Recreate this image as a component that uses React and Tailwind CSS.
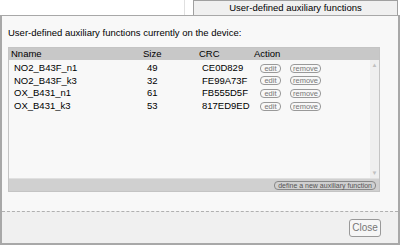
export default function App() {
  const rows = [
    ["NO2_B43F_n1", "49", "CE0D829"],
    ["NO2_B43F_k3", "32", "FE99A73F"],
    ["OX_B431_n1", "61", "FB555D5F"],
    ["OX_B431_k3", "53", "817ED9ED"],
  ];
  return (
    <div className="w-[400px] h-[245px] bg-white flex flex-col text-black" style={{ fontFamily: '"Liberation Sans", Arial, sans-serif' }}>
      <div className="h-[15px] flex shrink-0">
        <div className="ml-[184px] w-[9px] border-l border-[#e0e0e0]"></div>
        <div className="w-[205px] h-[16px] border border-[#a0a0a0] bg-[#f0f0f0] text-[9.5px] leading-[14px] text-center text-black">
          User-defined auxiliary functions
        </div>
      </div>
      <div className="w-[400px] h-[230px] flex flex-col border-t border-l-2 border-b-2 border-r-2 border-[#a8a8a8] bg-[#f8f8f8]">
        <div className="flex-1 px-[6px] pt-[11px] flex flex-col">
          <div className="text-[9.5px] leading-[12px] text-black">User-defined auxiliary functions currently on the device:</div>
          <div className="mt-[8px] w-[372px] border border-[#c4c4c4] flex flex-col">
            <div className="h-[12px] bg-[#c8c8c8] flex text-[9.5px] leading-[12px] text-black">
              <div className="w-[134px] pl-[2px]">Nname</div>
              <div className="w-[56px]">Size</div>
              <div className="w-[55px]">CRC</div>
              <div>Action</div>
            </div>
            <div className="h-[118px] flex bg-[#f8f8f8]">
              <div className="flex-1 pt-[2px]">
                {rows.map((r) => (
                  <div key={r[0]} className="h-[12.6px] flex items-center text-[9.5px] text-black">
                    <div className="w-[138px] pl-[5px]">{r[0]}</div>
                    <div className="w-[55px]">{r[1]}</div>
                    <div className="w-[58px]">{r[2]}</div>
                    <div className="flex gap-[9px] items-center">
                      <span className="w-[21px] h-[9px] border border-[#999] rounded-[4px] text-[7.5px] leading-[8px] text-center text-[#777]">edit</span>
                      <span className="w-[31px] h-[9px] border border-[#999] rounded-[4px] text-[7.5px] leading-[8px] text-center text-[#777]">remove</span>
                    </div>
                  </div>
                ))}
              </div>
              <div className="w-[9px] bg-[#efefef] flex flex-col justify-between items-center py-[2px] text-[6px] leading-[6px] text-[#c0c0c0]">
                <span>▲</span>
                <span>▼</span>
              </div>
            </div>
            <div className="h-[13px] bg-[#d0d0d0] border-t border-[#e0e0e0] flex justify-end items-center pr-[3px]">
              <span className="h-[9px] px-[3px] border border-[#888] rounded-[4px] text-[7px] leading-[8px] text-[#555]">define a new auxiliary function</span>
            </div>
          </div>
        </div>
        <div className="h-[32px] border-t border-dashed border-[#b0b0b0] bg-[#f0f0f0] flex items-center justify-end pr-[17px]">
          <button className="h-[18px] w-[32px] border border-[#999] rounded-[3px] bg-[#f6f6f6] text-[10px] text-[#777]">Close</button>
        </div>
      </div>
    </div>
  );
}
